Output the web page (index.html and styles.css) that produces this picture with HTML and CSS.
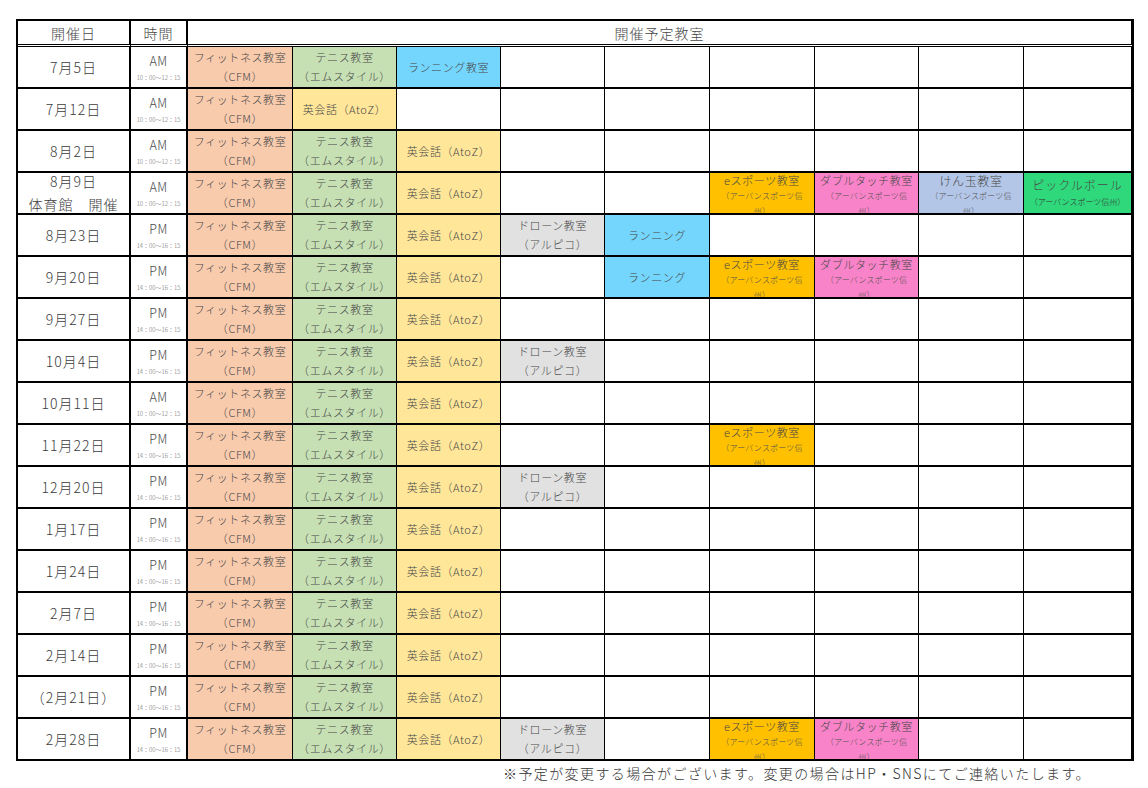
FILE: index.html
```html
<!DOCTYPE html>
<html lang="ja">
<head>
<meta charset="utf-8">
<title>開催予定教室</title>
<link rel="stylesheet" href="styles.css">
</head>
<body>
<div class="page">
<table class="sched">
<colgroup>
<col class="c-date"><col class="c-time">
<col class="c-a"><col class="c-b"><col class="c-b"><col class="c-b"><col class="c-a"><col class="c-a"><col class="c-b"><col class="c-a"><col class="c-last">
</colgroup>
<tr class="head"><th>開催日</th><th>時間</th><th colspan="9">開催予定教室</th></tr>

<tr><td class="date">7月5日</td><td class="time"><div class="tm"><span class="ap">AM</span><span class="hr">10：00～12：15</span></div></td><td class="f"><div class="two">フィットネス教室<br>（CFM）</div></td><td class="t"><div class="two">テニス教室<br>（エムスタイル）</div></td><td class="r">ランニング教室</td><td></td><td></td><td></td><td></td><td></td><td></td></tr>

<tr><td class="date">7月12日</td><td class="time"><div class="tm"><span class="ap">AM</span><span class="hr">10：00～12：15</span></div></td><td class="f"><div class="two">フィットネス教室<br>（CFM）</div></td><td class="e">英会話（AtoZ）</td><td></td><td></td><td></td><td></td><td></td><td></td><td></td></tr>

<tr><td class="date">8月2日</td><td class="time"><div class="tm"><span class="ap">AM</span><span class="hr">10：00～12：15</span></div></td><td class="f"><div class="two">フィットネス教室<br>（CFM）</div></td><td class="t"><div class="two">テニス教室<br>（エムスタイル）</div></td><td class="e">英会話（AtoZ）</td><td></td><td></td><td></td><td></td><td></td><td></td></tr>

<tr><td class="date"><div class="dwrap"><span>8月9日</span><span>体育館　開催</span></div></td><td class="time"><div class="tm"><span class="ap">AM</span><span class="hr">10：00～12：15</span></div></td><td class="f"><div class="two">フィットネス教室<br>（CFM）</div></td><td class="t"><div class="two">テニス教室<br>（エムスタイル）</div></td><td class="e">英会話（AtoZ）</td><td></td><td></td><td class="es"><div class="clip"><span class="ttl">eスポーツ教室</span><span class="sub">（アーバンスポーツ信<br>州）</span></div></td><td class="dt"><div class="clip"><span class="ttl">ダブルタッチ教室</span><span class="sub">（アーバンスポーツ信<br>州）</span></div></td><td class="k"><div class="clip"><span class="ttl big">けん玉教室</span><span class="sub">（アーバンスポーツ信<br>州）</span></div></td><td class="p"><div class="pk"><span class="pttl">ピックルボール</span><span class="psub">（アーバンスポーツ信州）</span></div></td></tr>

<tr><td class="date">8月23日</td><td class="time"><div class="tm"><span class="ap">PM</span><span class="hr">14：00～16：15</span></div></td><td class="f"><div class="two">フィットネス教室<br>（CFM）</div></td><td class="t"><div class="two">テニス教室<br>（エムスタイル）</div></td><td class="e">英会話（AtoZ）</td><td class="d"><div class="two">ドローン教室<br>（アルピコ）</div></td><td class="r">ランニング</td><td></td><td></td><td></td><td></td></tr>

<tr><td class="date">9月20日</td><td class="time"><div class="tm"><span class="ap">PM</span><span class="hr">14：00～16：15</span></div></td><td class="f"><div class="two">フィットネス教室<br>（CFM）</div></td><td class="t"><div class="two">テニス教室<br>（エムスタイル）</div></td><td class="e">英会話（AtoZ）</td><td></td><td class="r">ランニング</td><td class="es"><div class="clip"><span class="ttl">eスポーツ教室</span><span class="sub">（アーバンスポーツ信<br>州）</span></div></td><td class="dt"><div class="clip"><span class="ttl">ダブルタッチ教室</span><span class="sub">（アーバンスポーツ信<br>州）</span></div></td><td></td><td></td></tr>

<tr><td class="date">9月27日</td><td class="time"><div class="tm"><span class="ap">PM</span><span class="hr">14：00～16：15</span></div></td><td class="f"><div class="two">フィットネス教室<br>（CFM）</div></td><td class="t"><div class="two">テニス教室<br>（エムスタイル）</div></td><td class="e">英会話（AtoZ）</td><td></td><td></td><td></td><td></td><td></td><td></td></tr>

<tr><td class="date">10月4日</td><td class="time"><div class="tm"><span class="ap">PM</span><span class="hr">14：00～16：15</span></div></td><td class="f"><div class="two">フィットネス教室<br>（CFM）</div></td><td class="t"><div class="two">テニス教室<br>（エムスタイル）</div></td><td class="e">英会話（AtoZ）</td><td class="d"><div class="two">ドローン教室<br>（アルピコ）</div></td><td></td><td></td><td></td><td></td><td></td></tr>

<tr><td class="date">10月11日</td><td class="time"><div class="tm"><span class="ap">AM</span><span class="hr">10：00～12：15</span></div></td><td class="f"><div class="two">フィットネス教室<br>（CFM）</div></td><td class="t"><div class="two">テニス教室<br>（エムスタイル）</div></td><td class="e">英会話（AtoZ）</td><td></td><td></td><td></td><td></td><td></td><td></td></tr>

<tr><td class="date">11月22日</td><td class="time"><div class="tm"><span class="ap">PM</span><span class="hr">14：00～16：15</span></div></td><td class="f"><div class="two">フィットネス教室<br>（CFM）</div></td><td class="t"><div class="two">テニス教室<br>（エムスタイル）</div></td><td class="e">英会話（AtoZ）</td><td></td><td></td><td class="es"><div class="clip"><span class="ttl">eスポーツ教室</span><span class="sub">（アーバンスポーツ信<br>州）</span></div></td><td></td><td></td><td></td></tr>

<tr><td class="date">12月20日</td><td class="time"><div class="tm"><span class="ap">PM</span><span class="hr">14：00～16：15</span></div></td><td class="f"><div class="two">フィットネス教室<br>（CFM）</div></td><td class="t"><div class="two">テニス教室<br>（エムスタイル）</div></td><td class="e">英会話（AtoZ）</td><td class="d"><div class="two">ドローン教室<br>（アルピコ）</div></td><td></td><td></td><td></td><td></td><td></td></tr>

<tr><td class="date">1月17日</td><td class="time"><div class="tm"><span class="ap">PM</span><span class="hr">14：00～16：15</span></div></td><td class="f"><div class="two">フィットネス教室<br>（CFM）</div></td><td class="t"><div class="two">テニス教室<br>（エムスタイル）</div></td><td class="e">英会話（AtoZ）</td><td></td><td></td><td></td><td></td><td></td><td></td></tr>

<tr><td class="date">1月24日</td><td class="time"><div class="tm"><span class="ap">PM</span><span class="hr">14：00～16：15</span></div></td><td class="f"><div class="two">フィットネス教室<br>（CFM）</div></td><td class="t"><div class="two">テニス教室<br>（エムスタイル）</div></td><td class="e">英会話（AtoZ）</td><td></td><td></td><td></td><td></td><td></td><td></td></tr>

<tr><td class="date">2月7日</td><td class="time"><div class="tm"><span class="ap">PM</span><span class="hr">14：00～16：15</span></div></td><td class="f"><div class="two">フィットネス教室<br>（CFM）</div></td><td class="t"><div class="two">テニス教室<br>（エムスタイル）</div></td><td class="e">英会話（AtoZ）</td><td></td><td></td><td></td><td></td><td></td><td></td></tr>

<tr><td class="date">2月14日</td><td class="time"><div class="tm"><span class="ap">PM</span><span class="hr">14：00～16：15</span></div></td><td class="f"><div class="two">フィットネス教室<br>（CFM）</div></td><td class="t"><div class="two">テニス教室<br>（エムスタイル）</div></td><td class="e">英会話（AtoZ）</td><td></td><td></td><td></td><td></td><td></td><td></td></tr>

<tr><td class="date">（2月21日）</td><td class="time"><div class="tm"><span class="ap">PM</span><span class="hr">14：00～16：15</span></div></td><td class="f"><div class="two">フィットネス教室<br>（CFM）</div></td><td class="t"><div class="two">テニス教室<br>（エムスタイル）</div></td><td class="e">英会話（AtoZ）</td><td></td><td></td><td></td><td></td><td></td><td></td></tr>

<tr><td class="date">2月28日</td><td class="time"><div class="tm"><span class="ap">PM</span><span class="hr">14：00～16：15</span></div></td><td class="f"><div class="two">フィットネス教室<br>（CFM）</div></td><td class="t"><div class="two">テニス教室<br>（エムスタイル）</div></td><td class="e">英会話（AtoZ）</td><td class="d"><div class="two">ドローン教室<br>（アルピコ）</div></td><td></td><td class="es"><div class="clip"><span class="ttl">eスポーツ教室</span><span class="sub">（アーバンスポーツ信<br>州）</span></div></td><td class="dt"><div class="clip"><span class="ttl">ダブルタッチ教室</span><span class="sub">（アーバンスポーツ信<br>州）</span></div></td><td></td><td></td></tr>
</table>
<p class="note">※予定が変更する場合がございます。変更の場合はHP・SNSにてご連絡いたします。</p>
</div>
</body>
</html>
```

FILE: styles.css
```css
html, body {
  margin: 0;
  padding: 0;
  background: #fff;
}

body {
  font-family: "Noto Sans CJK JP", "Noto Sans", sans-serif;
  font-weight: 300;
  color: #484848;
}

.page {
  padding: 19px 0 0 16px;
}

.sched {
  border-collapse: separate;
  border-spacing: 0;
  table-layout: fixed;
  width: 1118px;
  border-top: 2px solid #000;
  border-left: 2px solid #000;
}

.c-date { width: 113px; }
.c-time { width: 57px; }
.c-a { width: 105px; }
.c-b { width: 104px; }
.c-last { width: 110px; }

.sched th,
.sched td {
  padding: 0;
  border-right: 1px solid #000;
  border-bottom: 2px solid #000;
  text-align: center;
  vertical-align: middle;
  overflow: hidden;
  box-sizing: border-box;
}

.sched th:nth-child(1),
.sched th:nth-child(2),
.sched td.date,
.sched td.time {
  border-right-width: 2px;
}

.sched th:last-child,
.sched td:last-child {
  border-right-width: 3px;
}

.sched tr {
  height: 42px;
}

.sched tr.head {
  height: 26px;
}

.sched th {
  font-weight: 300;
  font-size: 14px;
  letter-spacing: 1px;
  line-height: 18px;
  border-bottom: 3px double #000;
  color: #484848;
}

.date {
  font-size: 14px;
  letter-spacing: 1px;
  color: #3c3c3c;
}

.dwrap {
  height: 40px;
  overflow: hidden;
  display: flex;
  flex-direction: column;
  justify-content: center;
  align-items: center;
  line-height: 23px;
}

.dwrap span {
  white-space: nowrap;
}

.tm {
  display: flex;
  flex-direction: column;
  align-items: center;
  padding-top: 3px;
}

.ap {
  font-size: 12.5px;
  line-height: 18px;
  letter-spacing: 0.5px;
}

.hr {
  font-size: 6px;
  line-height: 15px;
  color: #666;
  white-space: nowrap;
}

.sched td.f,
.sched td.t,
.sched td.e,
.sched td.r,
.sched td.d {
  font-size: 11px;
  letter-spacing: 0.6px;
}

.two {
  line-height: 19px;
  white-space: nowrap;
}

.e { background: #ffe699; }
.f { background: #f8cbad; }
.t { background: #c6e0b4; }
.r { background: #75d6fd; }
.d { background: #e1e1e1; }
.es { background: #ffc000; }
.dt { background: #f983c8; }
.k { background: #b4c6e7; }
.p { background: #2fd87b; }

.sched td.es,
.sched td.dt,
.sched td.k {
  vertical-align: top;
}

.clip {
  height: 40px;
  overflow: hidden;
  display: flex;
  flex-direction: column;
  align-items: center;
}

.ttl {
  font-size: 11px;
  line-height: 15px;
  letter-spacing: 0.6px;
  white-space: nowrap;
}

.ttl.big {
  font-size: 12px;
  line-height: 15px;
}

.sub {
  font-size: 8px;
  line-height: 15px;
  letter-spacing: 0.2px;
  color: #505050;
  white-space: nowrap;
}

.pk {
  display: flex;
  flex-direction: column;
  align-items: center;
}

.pttl {
  font-size: 12px;
  line-height: 18px;
  letter-spacing: 1px;
  white-space: nowrap;
}

.psub {
  font-size: 8px;
  line-height: 16px;
  white-space: nowrap;
  color: #333;
}

.note {
  margin: 2px 0 0 0;
  padding-left: 487px;
  font-size: 14px;
  letter-spacing: 1.4px;
  line-height: 20px;
  color: #333;
}
```
